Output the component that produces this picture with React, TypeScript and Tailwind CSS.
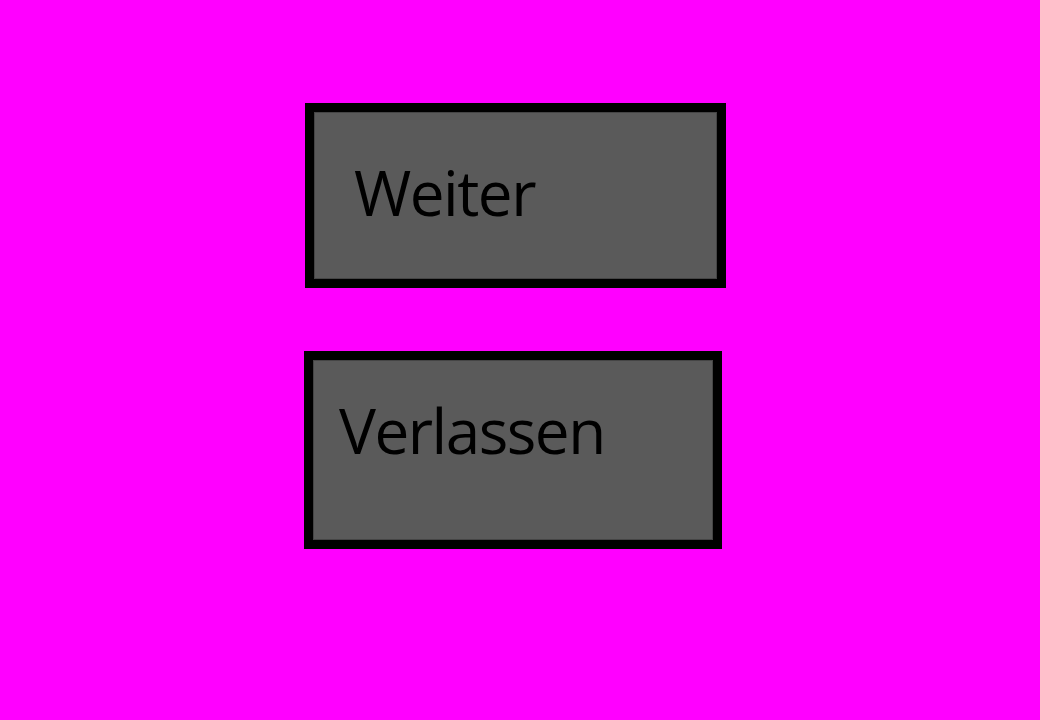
import React from "react";

// --- Menü-Buttons ---
const buttons = [
  { label: "Weiter", box: "ml-[305px] w-[421px] h-[185px]", text: "pt-[48px] pl-[39px]" },
  { label: "Verlassen", box: "ml-[304px] mt-[63px] w-[418px] h-[198px]", text: "pt-[38px] pl-[25px]" },
];

export default function App() {
  return (
    <div
      className="w-[1040px] h-[720px] bg-[#ff00ff] pt-[103px] flex flex-col"
      style={{ fontFamily: '"Open Sans", "Noto Sans", sans-serif' }}
    >
      {buttons.map((b) => (
        <button
          key={b.label}
          className={`${b.box} border-[9px] border-black bg-[#5a5a5a] text-left p-0 block`}
        >
          <div className={`w-full h-full border border-[#454545] ${b.text}`}>
            <span className="block text-[62px] leading-none tracking-[-1.5px] text-black">{b.label}</span>
          </div>
        </button>
      ))}
    </div>
  );
}
